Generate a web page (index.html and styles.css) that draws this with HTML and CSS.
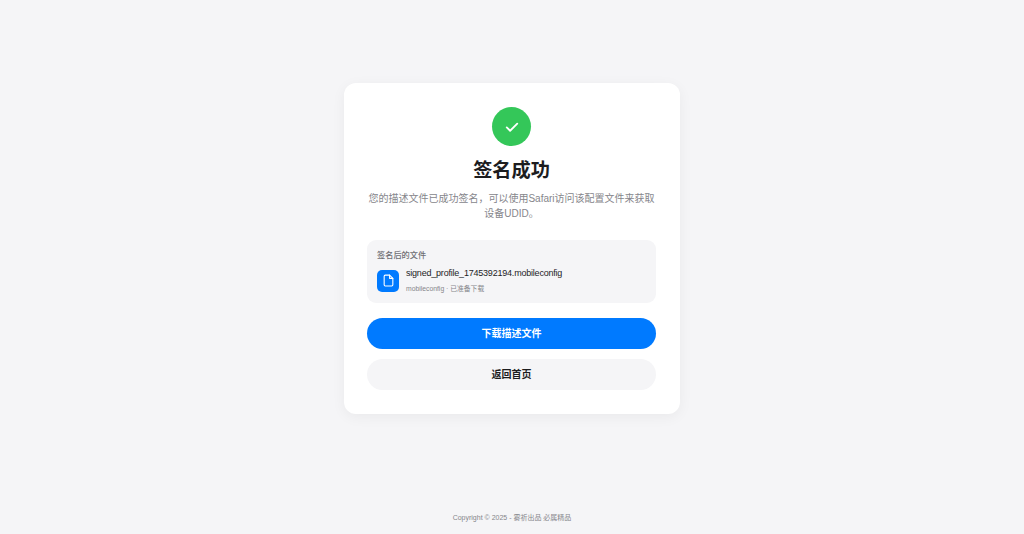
FILE: index.html
```html
<!DOCTYPE html>
<html lang="zh-CN">
<head>
    <meta charset="UTF-8">
    <meta name="viewport" content="width=device-width, initial-scale=1.0">
    <title>签名成功</title>
    <link rel="stylesheet" href="styles.css">
</head>
<body>
    <main class="page">
        <div class="card">
            <div class="success-icon">
                <svg viewBox="0 0 24 24" width="18" height="18" fill="none" stroke="#fff" stroke-width="2.4" stroke-linecap="round" stroke-linejoin="round">
                    <path d="M5 12.5l4.5 4.5L19 7.5"/>
                </svg>
            </div>
            <h1>签名成功</h1>
            <p class="desc">您的描述文件已成功签名，可以使用Safari访问该配置文件来获取设备UDID。</p>

            <div class="file-box">
                <div class="file-label">签名后的文件</div>
                <div class="file-row">
                    <div class="file-icon">
                        <svg viewBox="0 0 24 24" width="13" height="13" fill="none" stroke="#fff" stroke-width="2" stroke-linecap="round" stroke-linejoin="round">
                            <path d="M14 2H6a2 2 0 0 0-2 2v16a2 2 0 0 0 2 2h12a2 2 0 0 0 2-2V8z"/>
                            <path d="M14 2v6h6"/>
                        </svg>
                    </div>
                    <div class="file-info">
                        <div class="file-name">signed_profile_1745392194.mobileconfig</div>
                        <div class="file-meta">mobileconfig · 已准备下载</div>
                    </div>
                </div>
            </div>

            <a class="btn btn-primary" href="#">下载描述文件</a>
            <a class="btn btn-secondary" href="#">返回首页</a>
        </div>
    </main>
    <footer class="footer">Copyright © 2025 - 雾祈出品 必属精品</footer>
</body>
</html>
```
FILE: styles.css
```css
* {
    margin: 0;
    padding: 0;
    box-sizing: border-box;
}

body {
    height: 534px;
    display: flex;
    flex-direction: column;
    background-color: #f5f5f7;
    color: #1d1d1f;
    font-family: "Liberation Sans", "Noto Sans CJK SC", sans-serif;
    overflow: hidden;
}

.page {
    padding-top: 83px;
    display: flex;
    justify-content: center;
    flex: 1;
}

.card {
    width: 336px;
    height: 331px;
    padding: 24px 24px 24px 23px;
    background: #fff;
    border-radius: 12px;
    box-shadow: 0 3px 14px rgba(0, 0, 0, 0.05);
    text-align: center;
}

.success-icon {
    width: 39px;
    height: 39px;
    margin: 0 auto 11px;
    display: flex;
    align-items: center;
    justify-content: center;
    background: #34c759;
    border-radius: 50%;
}

h1 {
    font-size: 19.2px;
    line-height: 28px;
    font-weight: 600;
    margin-bottom: 6px;
}

.desc {
    font-size: 10px;
    line-height: 15px;
    color: #86868b;
    margin-bottom: 19px;
}

.file-box {
    height: 63px;
    padding: 10px 10px 8px;
    background: #f5f5f7;
    border-radius: 9px;
    text-align: left;
    margin-bottom: 15px;
}

.file-label {
    font-size: 8.2px;
    line-height: 12px;
    font-weight: 500;
    color: #6e6e73;
    margin-bottom: 5px;
}

.file-row {
    display: flex;
    align-items: center;
    gap: 7px;
}

.file-icon {
    width: 22px;
    height: 22px;
    display: flex;
    align-items: center;
    justify-content: center;
    background: #007aff;
    border-radius: 5px;
}

.file-name {
    font-size: 9px;
    line-height: 13px;
    letter-spacing: -0.21px;
    margin-bottom: 3px;
}

.file-meta {
    font-size: 6.8px;
    line-height: 11px;
    color: #86868b;
}

.btn {
    display: block;
    height: 31px;
    line-height: 31px;
    border-radius: 16px;
    font-size: 10px;
    font-weight: 600;
    text-decoration: none;
    text-align: center;
}

.btn-primary {
    background: #007aff;
    color: #fff;
    margin-bottom: 10px;
}

.btn-secondary {
    background: #f5f5f7;
    color: #1d1d1f;
}

.footer {
    height: 22px;
    font-size: 7px;
    line-height: 12px;
    color: #86868b;
    text-align: center;
}
```
